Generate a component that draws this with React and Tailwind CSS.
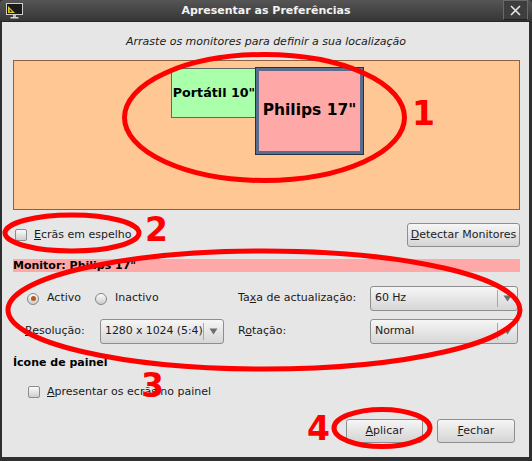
import React from 'react';

function Checkbox() {
  return (
    <span className="inline-block h-[12px] w-[12px] shrink-0 rounded-[2px] border border-[#8c8c8c] bg-gradient-to-b from-[#fafafa] to-[#cfcfcf]" />
  );
}

function Radio({ checked }) {
  return (
    <span className="flex h-[12px] w-[12px] shrink-0 items-center justify-center rounded-full border border-[#858585] bg-gradient-to-b from-[#fbfbfb] to-[#cdcdcd]">
      {checked && <span className="h-[5px] w-[5px] rounded-full bg-[#b8561c]" />}
    </span>
  );
}

function Arrow() {
  return (
    <svg width="9" height="7" viewBox="0 0 9 7">
      <path d="M0.5 0.5 H8.5 L4.5 6.5 Z" fill="#6e6e6e" />
    </svg>
  );
}

function Combo({ value, className }) {
  return (
    <div className={`flex h-[25px] items-center rounded-[3px] border border-[#8e8e8e] bg-gradient-to-b from-[#f6f6f6] to-[#d6d6d6] ${className}`}>
      <span className="min-w-0 flex-1 whitespace-nowrap pl-[4px] tracking-[-0.1px] text-[#1c1c1c]">{value}</span>
      <span className="h-[17px] w-px shrink-0 bg-[#a8a8a8]" />
      <span className="flex w-[19px] shrink-0 items-center justify-center">
        <Arrow />
      </span>
    </div>
  );
}

function Button({ children, className }) {
  return (
    <button
      type="button"
      className={`flex h-[24px] items-center justify-center rounded-[3px] border border-[#8e8e8e] bg-gradient-to-b from-[#f6f6f6] to-[#d4d4d4] text-[#1c1c1c] ${className}`}
    >
      {children}
    </button>
  );
}

function DisplayIcon() {
  return (
    <svg width="17" height="16" viewBox="0 0 17 16">
      <rect x="0.5" y="0.5" width="16" height="11" fill="#1a1a1a" stroke="#cfcfcf" />
      <path d="M2 10 L2 3 L9 10 Z" fill="#e2c52a" />
      <path d="M3.6 8.8 L3.6 6.3 L6.1 8.8 Z" fill="#1a1a1a" />
      <rect x="7" y="12" width="3" height="2" fill="#bdbdbd" />
      <rect x="4.5" y="14" width="8" height="1.5" fill="#d6d6d6" />
    </svg>
  );
}

function Annotations() {
  return (
    <svg className="pointer-events-none absolute left-0 top-0" width="532" height="461" viewBox="0 0 532 461">
      <g fill="none" stroke="#ff0000" strokeWidth="5">
        <ellipse cx="264.5" cy="117.5" rx="140" ry="63" />
        <ellipse cx="72" cy="233" rx="67" ry="18" />
        <ellipse cx="264" cy="310" rx="256" ry="59" />
        <ellipse cx="382" cy="428" rx="48" ry="18.5" />
      </g>
      <g fill="#ff0000" fontFamily="DejaVu Sans, sans-serif" fontWeight="bold" fontSize="33">
        <text x="412" y="125">1</text>
        <text x="145" y="241">2</text>
        <text x="141" y="397">3</text>
        <text x="307" y="440">4</text>
      </g>
    </svg>
  );
}

export default function App() {
  return (
    <div className="relative flex h-[461px] w-[532px] flex-col overflow-hidden bg-[#2f2f2f] font-['DejaVu_Sans',sans-serif] text-[11px] text-[#1a1a1a]">
      {/* title bar */}
      <div className="flex h-[22px] shrink-0 items-center rounded-t-[4px] border-b border-[#262626] bg-gradient-to-b from-[#555555] to-[#363636]">
        <div className="flex w-[30px] items-center pl-[6px] pt-[1px]">
          <DisplayIcon />
        </div>
        <div className="flex-1 text-center text-[11px] font-bold leading-[21px] text-[#f2f2f2]">
          Apresentar as Preferências
        </div>
        <div className="flex w-[30px] justify-end self-start pr-[4px]">
          <div className="flex h-[20px] w-[25px] items-center justify-center border border-[#6a6a6a] border-b-[#1e1e1e] bg-[#3e3e3e]">
            <svg width="11" height="11" viewBox="0 0 11 11">
              <path d="M1 1 L10 10 M10 1 L1 10" stroke="#e6e6e6" strokeWidth="1.6" />
            </svg>
          </div>
        </div>
      </div>

      {/* dialog body */}
      <div className="mb-[4px] ml-[2px] mr-[3px] flex flex-1 flex-col bg-[#e6e6e6] pl-[11px] pr-[10px]">
        <p className="mt-[12px] text-center italic leading-[15px] text-[#202020]">
          Arraste os monitores para definir a sua localização
        </p>

        {/* monitor arrangement canvas */}
        <div className="relative mt-[11px] h-[150px] w-[507px] border border-[#8e5f40] bg-[#ffc794]">
          <div className="absolute left-[157px] top-[7px] flex h-[50px] w-[86px] items-center justify-center whitespace-nowrap border border-[#5f6a5f] bg-[#aaffaa] text-[12.7px] font-bold text-black">
            Portátil 10"
          </div>
          <div className="absolute left-[242px] top-[7px] flex h-[86px] w-[107px] items-center justify-center whitespace-nowrap border-[3px] border-[#5b6d8f] bg-[#ffa8a8] text-[15.5px] font-bold text-black shadow-[0_0_0_1px_#28313f]">
            Philips 17"
          </div>
        </div>

        <div className="mt-[13px] flex h-[24px] w-[507px] items-center">
          <label className="flex items-center gap-[7px] pl-[2px]">
            <Checkbox />
            <span>
              <span className="underline">E</span>crãs em espelho
            </span>
          </label>
          <Button className="ml-auto w-[113px]">
            <span>
              <span className="underline">D</span>etectar Monitores
            </span>
          </Button>
        </div>

        <div className="mt-[12px] h-[13px] w-[507px] bg-[#ffa8a8] font-bold leading-[13px] text-black">
          Monitor: Philips 17"
        </div>

        <div className="mt-[14px] grid grid-cols-[225px_132px_148px] items-center">
          <div className="flex items-center pl-[14px]">
            <label className="flex items-center gap-[8px]">
              <Radio checked />
              <span>Activo</span>
            </label>
            <label className="ml-[14px] flex items-center gap-[8px]">
              <Radio />
              <span>Inactivo</span>
            </label>
          </div>
          <span>
            Ta<span className="underline">x</span>a de actualização:
          </span>
          <Combo value="60 Hz" className="w-[148px]" />
        </div>

        <div className="mt-[8px] grid grid-cols-[225px_132px_148px] items-center">
          <div className="flex items-center pl-[12px]">
            <span className="w-[75px] shrink-0">
              <span className="underline">R</span>esolução:
            </span>
            <Combo value="1280 x 1024 (5:4)" className="w-[124px] shrink-0" />
          </div>
          <span>
            R<span className="underline">o</span>tação:
          </span>
          <Combo value="Normal" className="w-[148px]" />
        </div>

        <div className="mt-[12px] font-bold leading-[14px] text-black">Ícone de painel</div>

        <label className="mt-[15px] flex h-[14px] items-center gap-[7px] pl-[15px]">
          <Checkbox />
          <span>
            <span className="underline">A</span>presentar os ecrãs no painel
          </span>
        </label>

        <div className="mt-[20px] flex justify-end gap-[14px] pr-[4px]">
          <Button className="w-[77px]">
            <span>
              <span className="underline">A</span>plicar
            </span>
          </Button>
          <Button className="w-[78px]">
            <span>
              <span className="underline">F</span>echar
            </span>
          </Button>
        </div>
      </div>

      <Annotations />
    </div>
  );
}
